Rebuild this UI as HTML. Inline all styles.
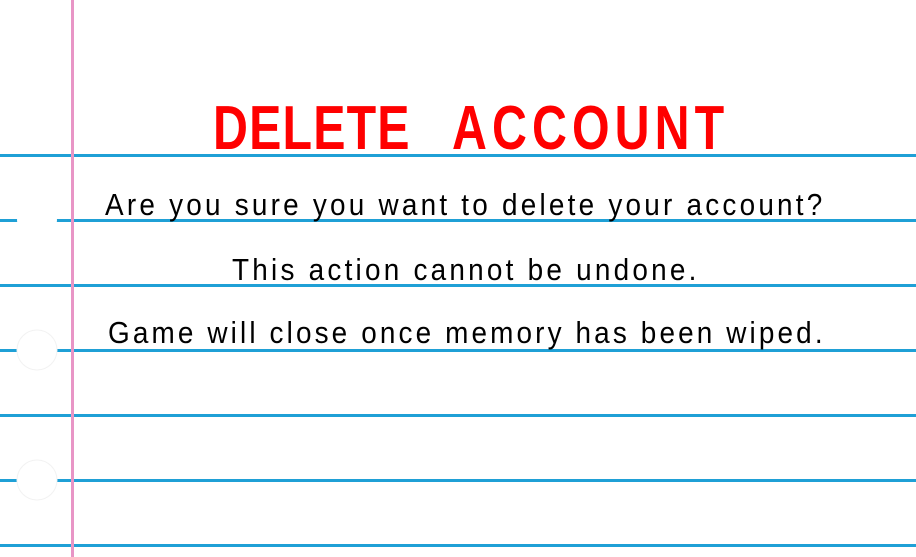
<!DOCTYPE html>
<html><head><style>
html,body{margin:0;padding:0;background:#fff;width:916px;height:557px;overflow:hidden}
</style></head><body>
<svg width="916" height="557" xmlns="http://www.w3.org/2000/svg">
<rect width="916" height="557" fill="#fff"/>
<g fill="#1fa0d6">
<rect x="0" y="154" width="916" height="3"/>
<rect x="0" y="219" width="916" height="3"/>
<rect x="0" y="284" width="916" height="3"/>
<rect x="0" y="349" width="916" height="3"/>
<rect x="0" y="414" width="916" height="3"/>
<rect x="0" y="479" width="916" height="3"/>
<rect x="0" y="544" width="916" height="3"/>
</g>
<g fill="#fff" stroke="#f2f2f2" stroke-width="1">
<circle cx="37" cy="220" r="20" stroke="none"/>
<circle cx="37" cy="350" r="20"/>
<circle cx="37" cy="480" r="20"/>
</g>
<rect x="71" y="0" width="3" height="557" fill="#e895c6"/>
<g font-family="Liberation Sans, sans-serif" font-weight="bold" font-size="62" fill="#ff0000">
<g transform="translate(213,149) scale(0.78,1)"><text x="0" y="0" textLength="252" lengthAdjust="spacing">DELETE</text></g>
<g transform="translate(452,149) scale(0.78,1)"><text x="0" y="0" textLength="349" lengthAdjust="spacing">ACCOUNT</text></g>
</g>
<g font-family="Liberation Sans, sans-serif" font-size="31" fill="#000">
<g transform="translate(105,215) scale(0.9,1)"><text x="0" y="0" textLength="797" lengthAdjust="spacing">Are you sure you want to delete your account?</text></g>
<g transform="translate(232,280) scale(0.9,1)"><text x="0" y="0" textLength="516" lengthAdjust="spacing">This action cannot be undone.</text></g>
<g transform="translate(108,343) scale(0.9,1)"><text x="0" y="0" textLength="794" lengthAdjust="spacing">Game will close once memory has been wiped.</text></g>
</g>
</svg>
</body></html>
